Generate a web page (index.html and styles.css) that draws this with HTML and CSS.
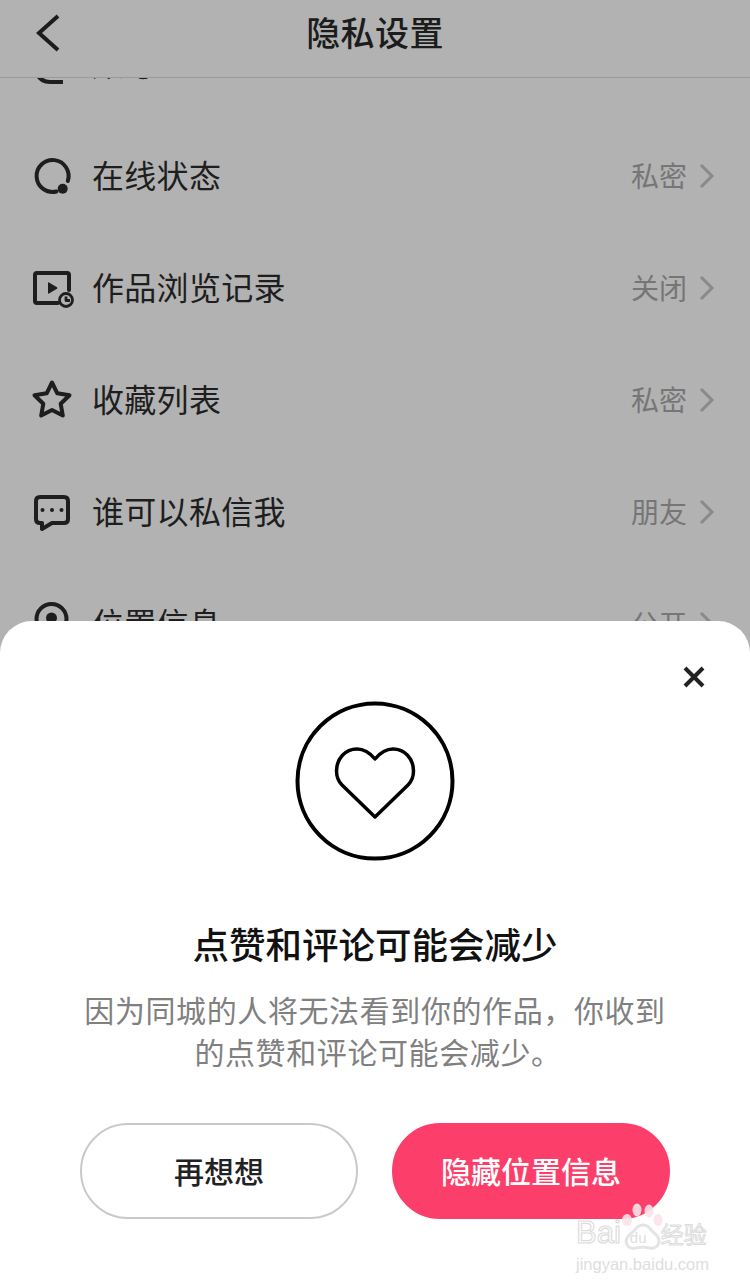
FILE: index.html
```html
<!DOCTYPE html>
<html lang="zh-CN">
  <head>
    <meta charset="UTF-8" />
    <meta name="viewport" content="width=device-width, initial-scale=1.0" />
    <title>隐私设置</title>
    <link rel="stylesheet" href="styles.css">
  </head>
  <body>
    <div class="screen">
      <header class="top-bar">
        <svg class="back" viewBox="0 0 40 48" width="40" height="48">
          <path d="M22 3 L3 20 L22 37" transform="translate(0 4)" />
        </svg>
        <h1>隐私设置</h1>
        <span></span>
      </header>

      <div class="list">
        <div class="row">
          <svg class="icon" viewBox="0 0 40 40"><path class="butt" d="M5 30 Q9 38 18 38 H31" /></svg>
          <span class="label">账号</span>
        </div>
        <div class="row">
          <svg class="icon" viewBox="0 0 40 40">
            <path d="M24.500 35.500 A16 16 0 1 1 35.800 25" />
            <circle class="fill plain" cx="30.700" cy="32.700" r="5" />
          </svg>
          <span class="label">在线状态</span>
          <span class="value">私密</span>
          <svg class="chevron" viewBox="0 0 18 28"><path d="M3 3 L14 14 L3 25" /></svg>
        </div>
        <div class="row">
          <svg class="icon" viewBox="0 0 40 40">
            <path d="M26 35 H5 Q3 35 3 33 V7 Q3 5 5 5 H35 Q37 5 37 7 V22" />
            <path class="fill plain" d="M16 15 Q16 14 17 14.500 L25 19.300 Q26 20 25 20.700 L17 25.500 Q16 26 16 25 Z" />
            <circle class="thin" cx="34" cy="32" r="6.500" />
            <path class="thin butt" d="M34 28.500 V32.500 H38" />
          </svg>
          <span class="label">作品浏览记录</span>
          <span class="value">关闭</span>
          <svg class="chevron" viewBox="0 0 18 28"><path d="M3 3 L14 14 L3 25" /></svg>
        </div>
        <div class="row">
          <svg class="icon" viewBox="0 0 40 40">
            <path d="M20 2.500 L25.300 13.300 L37.500 15.200 L28.700 23.800 L30.800 35.500 L20 30 L9.200 35.500 L11.300 23.800 L2.500 15.200 L14.700 13.300 Z" />
          </svg>
          <span class="label">收藏列表</span>
          <span class="value">私密</span>
          <svg class="chevron" viewBox="0 0 18 28"><path d="M3 3 L14 14 L3 25" /></svg>
        </div>
        <div class="row">
          <svg class="icon" viewBox="0 0 40 40">
            <path d="M8 5 H32 Q36 5 36 9 V27 Q36 31 32 31 H20 L10 37 V31 H8 Q4 31 4 27 V9 Q4 5 8 5 Z" />
            <circle class="fill plain" cx="10.500" cy="18" r="2" />
            <circle class="fill plain" cx="20" cy="18" r="2" />
            <circle class="fill plain" cx="29.500" cy="18" r="2" />
          </svg>
          <span class="label">谁可以私信我</span>
          <span class="value">朋友</span>
          <svg class="chevron" viewBox="0 0 18 28"><path d="M3 3 L14 14 L3 25" /></svg>
        </div>
        <div class="row">
          <svg class="icon" viewBox="0 0 40 40">
            <circle cx="19.500" cy="15" r="15" />
            <circle class="fill plain" cx="19.500" cy="14" r="5.500" />
          </svg>
          <span class="label">位置信息</span>
          <span class="value">公开</span>
          <svg class="chevron" viewBox="0 0 18 28"><path d="M3 3 L14 14 L3 25" /></svg>
        </div>
      </div>

      <section class="sheet">
        <svg class="close" viewBox="0 0 24 24" width="24" height="24">
          <path d="M3 3 L21 21 M21 3 L3 21" />
        </svg>
        <svg class="heart-badge" viewBox="0 0 160 160" width="160" height="160">
          <circle cx="80" cy="80" r="77.500" />
          <path class="heart" d="M80 116 L47 84 C43 80 41.500 75 41.500 70 C41.500 58 50 48 62 48 C69 48 75 52 80 58 C85 52 91 48 98 48 C110 48 118.500 58 118.500 70 C118.500 75 117 80 113 84 Z" />
        </svg>
        <h2>点赞和评论可能会减少</h2>
        <p>因为同城的人将无法看到你的作品，你收到<span class="line-two">的点赞和评论可能会减少。</span></p>
        <div class="actions">
          <button class="btn btn-ghost">再想想</button>
          <button class="btn btn-primary">隐藏位置信息</button>
        </div>
      </section>

      <div class="watermark">
        <svg class="paw" viewBox="0 0 50 52" width="50" height="52">
          <ellipse class="toe" cx="6" cy="17" rx="5" ry="6" />
          <ellipse class="toe" cx="16" cy="7" rx="4.500" ry="6.500" />
          <ellipse class="toe" cx="28" cy="8" rx="4.500" ry="6.500" />
          <ellipse class="toe" cx="37" cy="17" rx="4.500" ry="6" />
          <path class="bowl" d="M13 28 C18 20 26 20 31 28 C36 32 40 36 37 42 C33 48 27 44 22 44 C17 44 10 48 6 42 C3 36 8 32 13 28 Z" />
        </svg>
        <div class="wm-top"><span class="wm-bai">Bai</span><span class="wm-du">du</span><span class="wm-cn">经验</span></div>
        <div class="wm-url">jingyan.baidu.com</div>
      </div>
    </div>
  </body>
</html>
```

FILE: styles.css
```css
* {
  box-sizing: border-box;
}
body {
  margin: 0;
  padding: 0;
  font-family: "Noto Sans CJK SC", "Noto Sans", sans-serif;
  background-color: #b2b2b2;
}
.screen {
  position: relative;
  width: 750px;
  height: 1283px;
  overflow: hidden;
  background-color: #b2b2b2;
}

/* top bar */
.top-bar {
  position: relative;
  z-index: 1;
  display: grid;
  grid-template-columns: 1fr auto 1fr;
  align-items: center;
  height: 78px;
  padding-bottom: 12px;
  background-color: #b2b2b2;
  border-bottom: 1px solid #9a9a9a;
}
.top-bar h1 {
  margin: 0 0 2px;
  font-size: 34px;
  font-weight: 500;
  line-height: 50px;
  letter-spacing: 0.4px;
  color: #1c1c1c;
}
.back {
  margin-left: 36px;
  fill: none;
  stroke: #1c1c1c;
  stroke-width: 4;
}

/* list */
.list {
  margin-top: -70px;
}
.row {
  display: flex;
  align-items: center;
  height: 112px;
  padding: 0 34px 0 32px;
}
.icon {
  flex: none;
  width: 40px;
  height: 40px;
  margin-right: 20px;
  overflow: visible;
  fill: none;
  stroke: #1e1e1e;
  stroke-width: 4;
  stroke-linejoin: round;
  stroke-linecap: round;
}
.icon .fill {
  fill: #1e1e1e;
}
.icon .thin {
  stroke-width: 2.800;
}
.icon .plain {
  stroke: none;
}
.icon .butt {
  stroke-linecap: butt;
}
.label {
  flex: 1;
  margin-bottom: 4px;
  font-size: 32px;
  letter-spacing: 0.3px;
  color: #1e1e1e;
}
.value {
  margin-bottom: 2px;
  font-size: 28px;
  color: #767676;
}
.chevron {
  width: 18px;
  height: 28px;
  margin-left: 11px;
  fill: none;
  stroke: #8a8a8a;
  stroke-width: 3;
}

/* bottom sheet */
.sheet {
  position: absolute;
  z-index: 2;
  left: 0;
  right: 0;
  top: 621px;
  bottom: 0;
  display: flex;
  flex-direction: column;
  align-items: center;
  padding: 80px 80px 0;
  background-color: #ffffff;
  border-radius: 32px 32px 0 0;
}
.close {
  position: absolute;
  top: 44px;
  right: 44px;
  fill: none;
  stroke: #222222;
  stroke-width: 4;
}
.heart-badge {
  fill: none;
  stroke: #000000;
  stroke-width: 4;
}
.heart-badge .heart {
  stroke-width: 3.500;
  stroke-linejoin: round;
}
.sheet h2 {
  margin: 58px 0 0;
  font-size: 36.500px;
  font-weight: 500;
  line-height: 50px;
  color: #111111;
}
.sheet p {
  margin: 19px 0 0;
  font-size: 30px;
  line-height: 42px;
  letter-spacing: 0.600px;
  text-align: center;
  color: #808080;
}
.line-two {
  display: block;
  padding-left: 6px;
}
.actions {
  display: flex;
  gap: 34px;
  width: 100%;
  margin-top: 51px;
}
.btn {
  flex: 1;
  height: 96px;
  padding: 0 0 2px;
  border-radius: 48px;
  font-family: inherit;
  font-size: 30px;
  font-weight: 500;
}
.btn-ghost {
  background-color: #ffffff;
  border: 2px solid #c9c9c9;
  color: #222222;
}
.btn-primary {
  background-color: #fb3f6a;
  border: 2px solid #fb3f6a;
  color: #ffffff;
}

/* site watermark over the screenshot */
.watermark {
  position: absolute;
  z-index: 3;
  left: 576px;
  top: 1203px;
  width: 140px;
  color: #dedede;
}
.paw {
  position: absolute;
  left: 45px;
  top: 0;
  overflow: visible;
}
.paw .toe {
  fill: rgba(250, 226, 232, 0.9);
  stroke: none;
}
.paw .bowl {
  fill: none;
  stroke: rgba(225, 225, 225, 0.9);
  stroke-width: 3;
}
.wm-top {
  display: flex;
  align-items: baseline;
  margin-top: 14px;
  line-height: 32px;
}
.wm-bai {
  font-family: "Liberation Sans", sans-serif;
  font-size: 31px;
  color: transparent;
  -webkit-text-stroke: 1.200px #dcdcdc;
}
.wm-du {
  width: 40px;
  padding-left: 9px;
  font-family: "Liberation Sans", sans-serif;
  font-size: 15px;
}
.wm-cn {
  font-size: 23px;
  color: transparent;
  -webkit-text-stroke: 1px #dcdcdc;
}
.wm-url {
  font-family: "Liberation Sans", sans-serif;
  font-size: 16.500px;
  line-height: 20px;
  white-space: nowrap;
}
```
